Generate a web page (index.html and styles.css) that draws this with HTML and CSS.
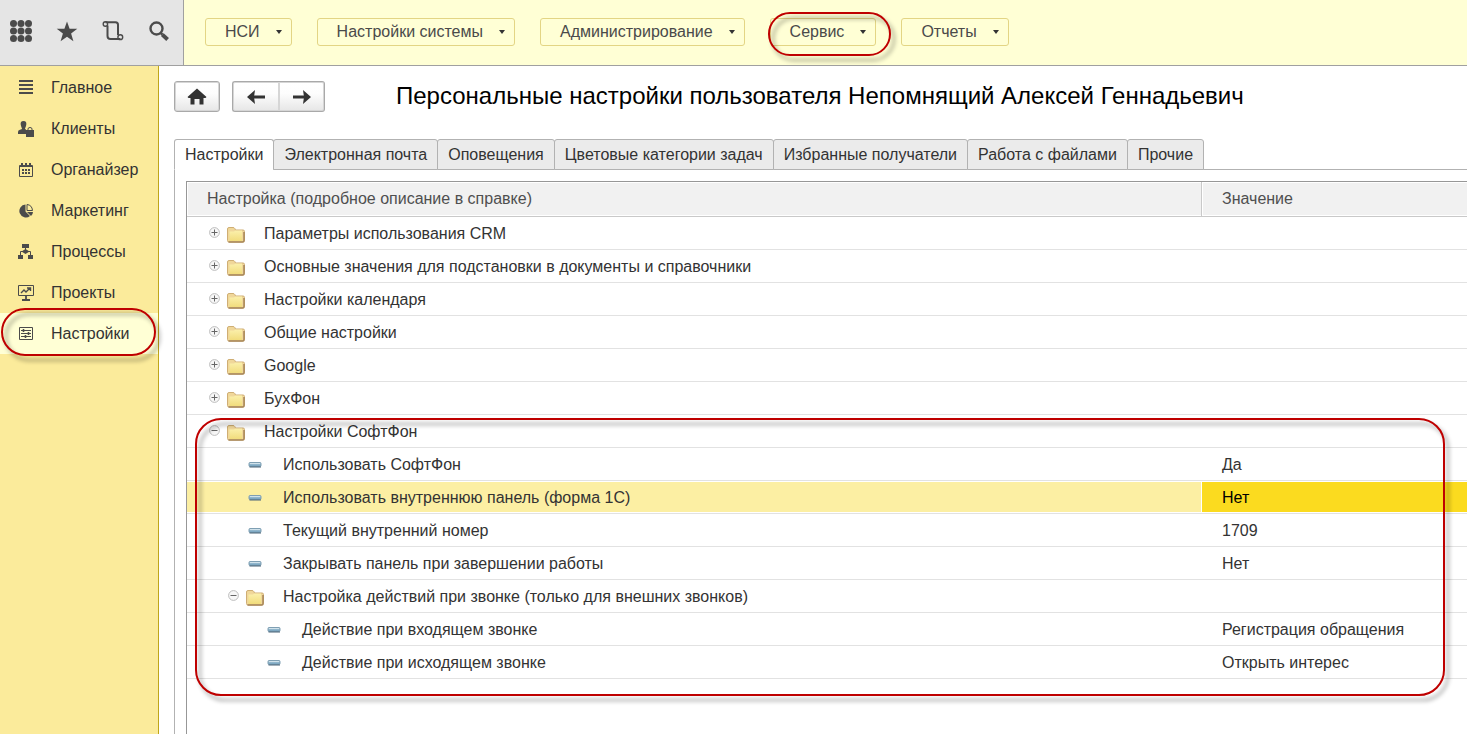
FILE: index.html
```html
<!DOCTYPE html>
<html lang="ru">
<head>
<meta charset="utf-8">
<title>Персональные настройки пользователя</title>
<link rel="stylesheet" href="styles.css">
</head>
<body>
<svg class="sprite" aria-hidden="true">
  <defs>
    <linearGradient id="paper" x1="0" y1="0" x2="0" y2="1">
      <stop offset="0" stop-color="#fbf0ac"/><stop offset="1" stop-color="#f1dc7c"/>
    </linearGradient>
    <linearGradient id="steel" x1="0" y1="0" x2="0" y2="1">
      <stop offset="0" stop-color="#b4cfdd"/><stop offset="1" stop-color="#6d9cba"/>
    </linearGradient>
    <symbol id="folder" viewBox="0 0 18 20">
      <path d="M.5 5q0-1.500 1.500-1.500h4q1.200 0 1.800 1l.7 1.500h7.500q1.500 0 1.500 1.500v9q0 1.500-1.500 1.500H2q-1.500 0-1.500-1.500z" fill="#f0d79a" stroke="#cfae74"/>
      <path d="M2.500 7.500h4.500l1.500-1h6.500v10.500H2.500z" fill="url(#paper)"/>
      <path d="M17 8v8.500q0 1.500-1.500 1.500H1.500" fill="none" stroke="#a8875a" stroke-width="1.500"/>
    </symbol>
    <symbol id="dash" viewBox="0 1 18 20">
      <rect x="3" y="8.500" width="12" height="4" rx="1" fill="url(#steel)" stroke="#7f9fb3"/>
      <path d="M3.500 13h11.500" stroke="#4a6579"/>
      <path d="M4 9.500h10" stroke="#d0e2eb"/>
    </symbol>
    <symbol id="plus" viewBox="0 0 11 11">
      <circle cx="5.500" cy="5.500" r="4.900" fill="#f7f7f7" stroke="#bdbdbd"/>
      <path d="M2.500 5.500h6M5.500 2.500v6" stroke="#666"/>
    </symbol>
    <symbol id="minus" viewBox="0 0 11 11">
      <circle cx="5.500" cy="5.500" r="4.900" fill="#f7f7f7" stroke="#bdbdbd"/>
      <path d="M2.500 5.500h6" stroke="#666"/>
    </symbol>
  </defs>
</svg>

<header class="top">
  <div class="tools">
    <button class="tool" aria-label="Меню"><svg viewBox="0 0 22 22"><g fill="#4b4b4b"><circle cx="3.500" cy="3.500" r="3.500"/><circle cx="11" cy="3.500" r="3.500"/><circle cx="18.500" cy="3.500" r="3.500"/><circle cx="3.500" cy="11" r="3.500"/><circle cx="11" cy="11" r="3.500"/><circle cx="18.500" cy="11" r="3.500"/><circle cx="3.500" cy="18.500" r="3.500"/><circle cx="11" cy="18.500" r="3.500"/><circle cx="18.500" cy="18.500" r="3.500"/></g></svg></button>
    <button class="tool" aria-label="Избранное"><svg viewBox="0 0 22 22"><path d="M11 1.500l2.600 7.300h7.700l-6.200 4.700 2.300 7.800L11 16.700l-6.400 4.600 2.300-7.800L.7 8.800h7.700z" fill="#4b4b4b"/></svg></button>
    <button class="tool" aria-label="История"><svg viewBox="0 0 22 22" fill="none" stroke="#4b4b4b" stroke-width="2"><path d="M3.500 2.200h10q2.500 0 2.500 2.500v10.300M5.500 5.500v10.500q0 3 3 3h10"/><circle cx="3.400" cy="4" r="2.200" stroke-width="1.400"/><circle cx="18.300" cy="17.200" r="2.400" stroke-width="1.400"/></svg></button>
    <button class="tool" aria-label="Поиск"><svg viewBox="0 0 22 22" fill="none" stroke="#4b4b4b"><circle cx="8.500" cy="8.500" r="6" stroke-width="2.400"/><path d="M12.800 13l1.700 1.700" stroke-width="2.500"/><path d="M14.300 14.600l5.300 4.900" stroke-width="4"/></svg></button>
  </div>
  <nav class="menu" aria-label="Раздел">
    <button class="drop">НСИ<span class="caret"></span></button>
    <button class="drop">Настройки системы<span class="caret"></span></button>
    <button class="drop">Администрирование<span class="caret"></span></button>
    <button class="drop">Сервис<span class="caret"></span><span class="ring ring-menu"></span></button>
    <button class="drop">Отчеты<span class="caret"></span></button>
  </nav>
</header>

<div class="body">
  <nav class="side" aria-label="Разделы">
    <a class="item" href="#"><svg viewBox="0 0 16 16"><path d="M1 1h14M1 5h14M1 9h14M1 13h14" stroke="#4b4b4b" stroke-width="2"/></svg>Главное</a>
    <a class="item" href="#"><svg viewBox="0 0 16 16" fill="#4b4b4b"><path d="M5.500 0C8 0 8.500 1.500 8.300 3.500 8 6 7 7 7 8l1 .5V13H0v-2q0-1.800 2-2.300L4 8C4 7 3 6 2.700 3.500 2.500 1.500 3 0 5.500 0z"/><path d="M8 9h8v7H8z"/><path d="M10 9.500V8q0-1.500 2-1.500t2 1.500v1.500" fill="none" stroke="#4b4b4b"/></svg>Клиенты</a>
    <a class="item" href="#"><svg viewBox="0 0 16 16"><path d="M1.500 3.500h13v11h-13zM1 4.500h14" fill="none" stroke="#4b4b4b"/><path d="M3 1h2v3H3zM7 1h2v3H7zM11 1h2v3h-2zM4 7h2v2H4zM7 7h2v2H7zM10 7h2v2h-2zM4 10h2v2H4zM7 10h2v2H7zM10 10h2v2h-2z" fill="#4b4b4b"/></svg>Органайзер</a>
    <a class="item" href="#"><svg viewBox="0 0 16 16"><path d="M7.500 1.500A6.500 6.500 0 1 0 12 13L7.500 8.500z" fill="#4b4b4b"/><path d="M9 9h6q0 2-2 4z" fill="#4b4b4b"/><path d="M9 1.500q5 .5 5.500 6H9z" fill="none" stroke="#4b4b4b"/></svg>Маркетинг</a>
    <a class="item" href="#"><svg viewBox="0 0 16 16" fill="#4b4b4b"><path d="M4 0h7v4H4zM0 11h5v4H0zM10 11h5v4h-5zM7.500 5l4 2.500-4 2.500-4-2.500z"/><path d="M7.500 4v5M2.500 11V7.500h10V11" fill="none" stroke="#4b4b4b"/></svg>Процессы</a>
    <a class="item" href="#"><svg viewBox="0 0 16 16" fill="none" stroke="#4b4b4b"><path d="M.5.500h15v10H.5z"/><path d="M8 11v4M4 15h8" stroke-width="1.800"/><path d="M3 8l3-3 2 2 4-4M9 3h3.500v3" stroke-width="1.400"/></svg>Проекты</a>
    <a class="item item-active" href="#" aria-current="page"><svg viewBox="0 0 16 16" fill="none" stroke="#4b4b4b"><path d="M1.500 1.500h13v12h-13z"/><path d="M3 4.500h10M3 7.500h10M3 10.500h10"/><path d="M5.500 3v3M10.500 6v3M7.500 9v3" stroke-width="1.600"/></svg>Настройки<span class="ring ring-side"></span></a>
  </nav>

  <main class="page">
    <div class="heading">
      <button class="push" aria-label="Начальная страница"><svg viewBox="0 0 20 20"><path d="M10 1.500l9.500 8.500-1 1H16.500v6.500h-4V12h-5v5.500h-4V11h-2l-1-1z" fill="#333"/></svg></button>
      <div class="pair">
        <button class="push" aria-label="Назад"><svg viewBox="0 0 20 20"><path d="M19 10H6" stroke="#333" stroke-width="3"/><path d="M1 10l8-7-1 7 1 7z" fill="#333"/></svg></button>
        <button class="push" aria-label="Вперед"><svg viewBox="0 0 20 20"><path d="M1 10h13" stroke="#333" stroke-width="3"/><path d="M19 10l-8-7 1 7-1 7z" fill="#333"/></svg></button>
      </div>
      <h1 class="title">Персональные настройки пользователя Непомнящий Алексей Геннадьевич</h1>
    </div>

    <div class="tabs" role="tablist">
      <button class="tab tab-active" role="tab" aria-selected="true">Настройки</button>
      <button class="tab" role="tab">Электронная почта</button>
      <button class="tab" role="tab">Оповещения</button>
      <button class="tab" role="tab">Цветовые категории задач</button>
      <button class="tab" role="tab">Избранные получатели</button>
      <button class="tab" role="tab">Работа с файлами</button>
      <button class="tab" role="tab">Прочие</button>
    </div>

    <section class="panel" role="tabpanel">
      <div class="grid">
        <div class="grid-body">
        <table class="table">
          <colgroup><col><col class="col-value"></colgroup>
          <thead><tr><th>Настройка (подробное описание в справке)</th><th>Значение</th></tr></thead>
          <tbody>
            <tr><td><div class="node"><button class="toggle" aria-label="Развернуть"><svg><use href="#plus"/></svg></button><svg class="mark"><use href="#folder"/></svg>Параметры использования CRM</div></td><td></td></tr>
            <tr><td><div class="node"><button class="toggle" aria-label="Развернуть"><svg><use href="#plus"/></svg></button><svg class="mark"><use href="#folder"/></svg>Основные значения для подстановки в документы и справочники</div></td><td></td></tr>
            <tr><td><div class="node"><button class="toggle" aria-label="Развернуть"><svg><use href="#plus"/></svg></button><svg class="mark"><use href="#folder"/></svg>Настройки календаря</div></td><td></td></tr>
            <tr><td><div class="node"><button class="toggle" aria-label="Развернуть"><svg><use href="#plus"/></svg></button><svg class="mark"><use href="#folder"/></svg>Общие настройки</div></td><td></td></tr>
            <tr><td><div class="node"><button class="toggle" aria-label="Развернуть"><svg><use href="#plus"/></svg></button><svg class="mark"><use href="#folder"/></svg>Google</div></td><td></td></tr>
            <tr><td><div class="node"><button class="toggle" aria-label="Развернуть"><svg><use href="#plus"/></svg></button><svg class="mark"><use href="#folder"/></svg>БухФон</div></td><td></td></tr>
            <tr><td><div class="node"><button class="toggle" aria-label="Свернуть"><svg><use href="#minus"/></svg></button><svg class="mark"><use href="#folder"/></svg>Настройки СофтФон</div></td><td></td></tr>
            <tr><td><div class="node level-1"><span class="toggle"></span><svg class="mark"><use href="#dash"/></svg>Использовать СофтФон</div></td><td>Да</td></tr>
            <tr class="selected"><td><div class="node level-1"><span class="toggle"></span><svg class="mark"><use href="#dash"/></svg>Использовать внутреннюю панель (форма 1С)</div></td><td>Нет</td></tr>
            <tr><td><div class="node level-1"><span class="toggle"></span><svg class="mark"><use href="#dash"/></svg>Текущий внутренний номер</div></td><td>1709</td></tr>
            <tr><td><div class="node level-1"><span class="toggle"></span><svg class="mark"><use href="#dash"/></svg>Закрывать панель при завершении работы</div></td><td>Нет</td></tr>
            <tr><td><div class="node level-1"><button class="toggle" aria-label="Свернуть"><svg><use href="#minus"/></svg></button><svg class="mark"><use href="#folder"/></svg>Настройка действий при звонке (только для внешних звонков)</div></td><td></td></tr>
            <tr><td><div class="node level-2"><span class="toggle"></span><svg class="mark"><use href="#dash"/></svg>Действие при входящем звонке</div></td><td>Регистрация обращения</td></tr>
            <tr><td><div class="node level-2"><span class="toggle"></span><svg class="mark"><use href="#dash"/></svg>Действие при исходящем звонке</div></td><td>Открыть интерес</td></tr>
          </tbody>
        </table>
        <span class="ring ring-table"></span>
        </div>
      </div>
    </section>
  </main>
</div>
</body>
</html>
```
FILE: styles.css
```css
* { box-sizing: border-box; }

body {
  margin: 0;
  min-height: 100vh;
  display: flex;
  flex-direction: column;
  font: 16px/20px "Liberation Sans", Arial, sans-serif;
  color: #333;
  background: #fff;
}

button {
  margin: 0;
  padding: 0;
  border: 0;
  background: none;
  font: inherit;
  color: inherit;
}

svg { display: block; flex: none; }
.sprite { position: absolute; width: 0; height: 0; }

/* Top bar */
.top {
  display: flex;
  height: 66px;
  border-bottom: 1px solid #a0a0a0;
  background: #ffffd5;
}

.tools {
  display: flex;
  align-items: center;
  gap: 24px;
  width: 184px;
  padding: 0 0 4px 10px;
  border-right: 1px solid #a0a0a0;
  background: #e5e5e5;
}
.tool svg { width: 22px; height: 22px; }

.menu {
  display: flex;
  align-items: center;
  gap: 25px;
  padding: 0 21px 2px;
}

.drop {
  position: relative;
  display: flex;
  align-items: center;
  gap: 16px;
  height: 28px;
  padding: 0 9px 0 19px;
  border: 1px solid #e3d584;
  border-radius: 3px;
  color: #4a4a4a;
  white-space: nowrap;
}

.caret {
  border: 3px solid transparent;
  border-top: 4px solid #333;
  border-bottom: 0;
}

/* Sidebar */
.body { display: flex; flex: 1; }

.side {
  display: flex;
  flex-direction: column;
  flex: none;
  width: 159px;
  padding-top: 1px;
  border-right: 1px solid #bfa619;
  background: #fbeb9b;
}

.item {
  position: relative;
  display: flex;
  align-items: center;
  gap: 17px;
  height: 41px;
  padding-left: 18px;
  color: #333;
  text-decoration: none;
}
.item svg { width: 16px; height: 16px; }
.item-active { background: #ffffd5; }

/* Red outlines drawn over the interface */
.ring {
  position: absolute;
  border: 2px solid #bf0000;
  border-radius: 26px;
  filter: drop-shadow(4px 5px 2px rgba(0, 0, 0, 0.4));
  pointer-events: none;
  z-index: 1;
}
.ring-side { inset: -5px 2px -2px 1px; }
.ring-menu { inset: -7px -16px -11px -3px; }
.ring-table { inset: 236px 22px -17px 8px; }

/* Page */
.page {
  display: flex;
  flex-direction: column;
  flex: 1;
  min-width: 0;
  padding: 15px 0 0 15px;
}

.heading { display: flex; align-items: center; gap: 12px; }

.push {
  display: flex;
  align-items: center;
  justify-content: center;
  width: 46px;
  height: 31px;
  border: 1px solid #a9a9a9;
  border-radius: 3px;
  background: linear-gradient(#fff, #fdfdfd 40%, #e6e6e6);
  box-shadow: inset 0 0 0 1px #d6d6d6;
}
.push svg { width: 20px; height: 20px; }

.pair { display: flex; }
.pair .push:first-child { width: 47px; border-right: 0; border-radius: 3px 0 0 3px; }
.pair .push:last-child { border-left: 0; border-radius: 0 3px 3px 0; }

.title {
  margin: 0 0 2px 59px;
  font-size: 24px;
  line-height: 28px;
  font-weight: 400;
  color: #000;
  white-space: nowrap;
}

.tabs {
  position: relative;
  z-index: 1;
  display: flex;
  margin-top: 27px;
}

.tab {
  height: 31px;
  margin-right: -1px;
  padding: 0 10px;
  border: 1px solid #b2b2b2;
  border-radius: 3px 3px 0 0;
  background: #ebebeb;
  white-space: nowrap;
}
.tab-active { border-bottom-color: #fff; background: #fff; }

.panel {
  display: flex;
  flex: 1;
  margin-top: -1px;
  padding: 11px 0 0 11px;
  border: solid #b2b2b2;
  border-width: 1px 0 0 1px;
}

.grid {
  flex: 1;
  border: solid #979797;
  border-width: 1px 0 0 1px;
}
.grid-body { position: relative; }

.table {
  width: 100%;
  table-layout: fixed;
  border-collapse: separate;
  border-spacing: 0;
}
.col-value { width: 266px; }

th {
  height: 35px;
  padding: 0 20px;
  border-bottom: 1px solid #c9c9c9;
  background: #f1f1f1;
  box-shadow: inset 1px 1px #fff, inset 0 -1px #fff;
  color: #4f4f4f;
  font-weight: 400;
  text-align: left;
}
th + th { border-left: 1px solid #c9c9c9; }

td {
  height: 33px;
  padding: 2px 20px 0;
  border-bottom: 1px solid #e2e2e2;
}
td:first-child { padding-left: 22px; }

.node { display: flex; align-items: center; }
.level-1 { padding-left: 19px; }
.level-2 { padding-left: 38px; }

.toggle { width: 11px; height: 11px; margin: 0 7px 3px 0; }
.toggle svg { width: 11px; height: 11px; }
.mark { width: 18px; height: 20px; margin-right: 19px; }

td + td { padding-left: 21px; }

.selected td {
  background: #fcefa3;
  box-shadow: inset 0 1px #fff, inset 0 -1px #fff;
}
.selected td + td {
  background: #fbdb1f;
  box-shadow: inset 1px 1px #fff, inset 0 -1px #fff;
  color: #000;
}
```
